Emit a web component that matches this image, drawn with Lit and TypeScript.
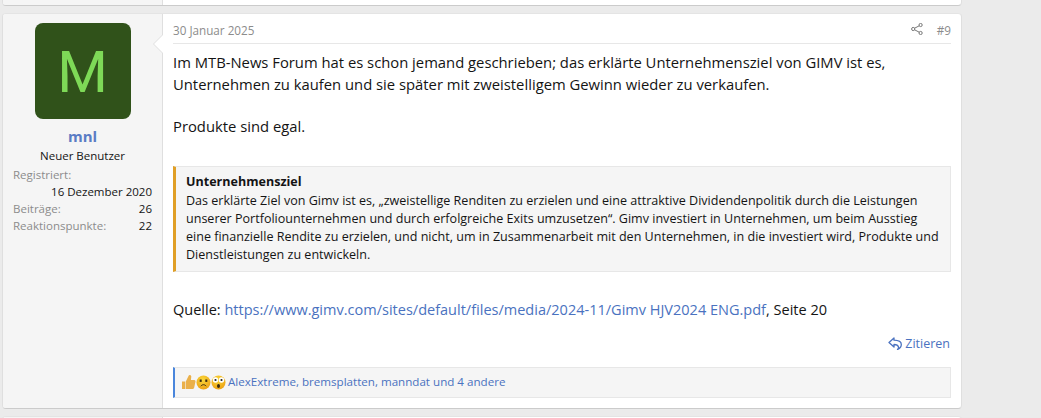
import { LitElement, html, css } from "lit";
import { customElement } from "lit/decorators.js";

@customElement("app-root")
export class AppRoot extends LitElement {
  static styles = css`
    :host { display: block; height: 418px; overflow: hidden; background: #ebebeb; font-family: "Open Sans", sans-serif; color: #141414; }
    .list { display: flex; flex-direction: column; gap: 7px; margin-top: -10px; padding-left: 2px; width: 960px; }
    .card { display: flex; box-sizing: border-box; background: #fff; border: 1px solid #dfdfdf; border-top-color: #e4e4e4; border-bottom-color: #cbcbcb; border-radius: 4px; overflow: hidden; }
    .stub { height: 16px; }
    .stub .side { height: 100%; }
    .side { width: 160px; flex: none; box-sizing: border-box; background: #f5f5f5; border-right: 1px solid #dfdfdf; position: relative; }
    .post { height: 396px; }
    .post .side { padding: 9px 10px 0; text-align: center; }
    .arrow { position: absolute; right: -1px; top: 20px; width: 0; height: 0; border: 10px solid transparent; border-left: 0; border-right-color: #dfdfdf; }
    .arrow::after { content: ""; position: absolute; left: 1px; top: -9px; border: 9px solid transparent; border-left: 0; border-right-color: #fff; }
    .avatar { width: 96px; height: 96px; margin: 0 auto; border-radius: 8px; background: #30521a; color: #7ed957; font: 400 58px/99px "Roboto", sans-serif; display: block; text-align: center; overflow: hidden; }
    .name { font-size: 15px; font-weight: 700; line-height: 20px; color: #5a7cc4; margin-top: 7px; }
    .title { font-size: 11.500px; line-height: 17px; margin-top: 1px; }
    .stats { margin: 2px 0 0; font-size: 11.500px; line-height: 17px; text-align: left; }
    .row { display: flex; justify-content: space-between; }
    .row dt { color: #8c8c8c; }
    .row dd { margin: 0; }
    .row.wrap { display: block; }
    .row.wrap dd { text-align: right; }
    dl { margin: 0; }
    .main { flex: 1; min-width: 0; padding: 0 10px; display: flex; flex-direction: column; }
    .head { display: flex; justify-content: space-between; align-items: center; height: 30px; padding-top: 3px; box-sizing: border-box; border-bottom: 1px solid #e7e7e7; font-size: 11.700px; color: #8c8c8c; }
    .hr { display: flex; align-items: center; gap: 14px; }
    .share { display: block; margin-top: -2px; }
    .body { font-size: 14.800px; line-height: 21.500px; padding-top: 8px; }
    .body p { margin: 0; }
    .gap { height: 21px; }
    .quote { margin: 28.500px 0 0; box-sizing: border-box; height: 106px; padding: 6px 10px; background: #f5f5f5; border: 1px solid #e7e7e7; border-left: 3px solid #e09f26; font-size: 12.550px; line-height: 18px; }
    .quote b { display: block; font-weight: 700; height: 19px; }
    .body .source { margin-top: 27px; font-size: 14.530px; }
    a { color: #4a72c0; text-decoration: none; }
    .actions { display: flex; justify-content: flex-end; align-items: center; gap: 3px; margin-top: 13px; margin-right: 1px; height: 20px; font-size: 12.500px; color: #4a72c0; }
    .likes { margin-top: 13px; height: 31px; box-sizing: border-box; display: flex; align-items: center; gap: 2px; padding: 0 0 2px 6px; background: #f5f5f5; border: 1px solid #e7e7e7; border-left: 2px solid #4a86dc; font-size: 11.600px; color: #4a72c0; }
    .emo { display: flex; gap: 0; margin-top: 2px; }
    .emo svg { display: block; width: 15px; height: 18px; }
  `;

  render() {
    return html`<div class="list">
      <div class="card stub"><div class="side"></div></div>
      <div class="card post">
        <div class="side">
          <span class="arrow"></span>
          <div class="avatar">M</div>
          <div class="name">mnl</div>
          <div class="title">Neuer Benutzer</div>
          <dl class="stats">
            <div class="row wrap"><dt>Registriert:</dt><dd>16 Dezember 2020</dd></div>
            <div class="row"><dt>Beiträge:</dt><dd>26</dd></div>
            <div class="row"><dt>Reaktionspunkte:</dt><dd>22</dd></div>
          </dl>
        </div>
        <div class="main">
          <div class="head">
            <span>30 Januar 2025</span>
            <span class="hr">
              <svg class="share" width="12" height="12" viewBox="0 0 12 12" fill="none" stroke="#777" stroke-width="1"><circle cx="2.2" cy="6" r="1.6"/><circle cx="9.6" cy="2" r="1.6"/><circle cx="9.6" cy="10" r="1.6"/><path d="M3.6 5.2 8.2 2.8M3.6 6.8l4.6 2.4"/></svg>
              <span>#9</span>
            </span>
          </div>
          <div class="body">
            <p>Im MTB-News Forum hat es schon jemand geschrieben; das erklärte Unternehmensziel von GIMV ist es, Unternehmen zu kaufen und sie später mit zweistelligem Gewinn wieder zu verkaufen.</p>
            <div class="gap"></div>
            <p>Produkte sind egal.</p>
            <div class="quote"><b>Unternehmensziel</b>Das erklärte Ziel von Gimv ist es, „zweistellige Renditen zu erzielen und eine attraktive Dividendenpolitik durch die Leistungen unserer Portfoliounternehmen und durch erfolgreiche Exits umzusetzen“. Gimv investiert in Unternehmen, um beim Ausstieg eine finanzielle Rendite zu erzielen, und nicht, um in Zusammenarbeit mit den Unternehmen, in die investiert wird, Produkte und Dienstleistungen zu entwickeln.</div>
            <p class="source">Quelle: <a href="#">https://www.gimv.com/sites/default/files/media/2024-11/Gimv HJV2024 ENG.pdf</a>, Seite 20</p>
          </div>
          <div class="actions">
            <svg width="14" height="13" viewBox="0 0 14 13" fill="none" stroke="#4a72c0" stroke-width="1.3" stroke-linejoin="round"><path d="M6 1 1 5.500 6 10V7.500c2.500 0 4 .5 4.500 2.500.2 1-.3 1.800-1 2.500 2.500-1 3.800-2.800 3.800-5 0-3-3-4.200-7.300-4.300z"/></svg>
            <span>Zitieren</span>
          </div>
          <div class="likes">
            <span class="emo">
              <svg viewBox="0 0 15 18"><path d="M1 8.500h3.200V16H1zM4.800 8.500 7.500 3c.3-1.500 2.500-1.500 2.800.5l-.4 3.500h3.300c1.200 0 1.500 1 1.200 2l-1.200 5.500c-.3 1-1 1.500-2 1.500H4.800z" fill="#eab04a"/></svg>
              <svg viewBox="0 0 15 18"><defs><radialGradient id="f1" cx=".45" cy=".3" r=".8"><stop offset="0" stop-color="#fad83a"/><stop offset="1" stop-color="#eb9a10"/></radialGradient></defs><circle cx="7.500" cy="9.500" r="7" fill="url(#f1)"/><rect x="3.700" y="6.500" width="2" height="2.400" fill="#3a2a10"/><rect x="9.300" y="6.500" width="2" height="2.400" fill="#3a2a10"/><path d="M4.800 13.200c1.500-2 3.900-2 5.400 0" stroke="#3a2a10" fill="none"/></svg>
              <svg viewBox="0 0 15 18"><defs><radialGradient id="f2" cx=".45" cy=".3" r=".8"><stop offset="0" stop-color="#fad83a"/><stop offset="1" stop-color="#eb9a10"/></radialGradient></defs><circle cx="7.500" cy="9.500" r="7" fill="url(#f2)"/><circle cx="4.500" cy="7" r="2.700" fill="#fff"/><circle cx="10.500" cy="7" r="2.700" fill="#fff"/><circle cx="4.500" cy="7" r="1.100" fill="#222"/><circle cx="10.500" cy="7" r="1.100" fill="#222"/><ellipse cx="7.500" cy="13" rx="1.500" ry="2" fill="#3a2a10"/></svg>
            </span>
            <span>AlexExtreme, bremsplatten, manndat und 4 andere</span>
          </div>
        </div>
      </div>
      <div class="card stub"><div class="side"></div></div>
    </div>`;
  }
}
